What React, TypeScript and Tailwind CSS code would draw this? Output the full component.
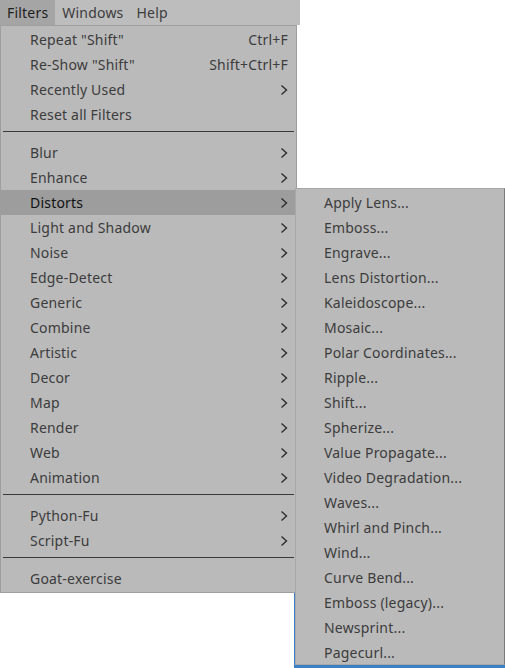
import React from "react";

type Item =
  | { kind: "item"; label: string; shortcut?: string; sub?: boolean; active?: boolean }
  | { kind: "sep" };

const mainMenu: Item[] = [
  { kind: "item", label: 'Repeat "Shift"', shortcut: "Ctrl+F" },
  { kind: "item", label: 'Re-Show "Shift"', shortcut: "Shift+Ctrl+F" },
  { kind: "item", label: "Recently Used", sub: true },
  { kind: "item", label: "Reset all Filters" },
  { kind: "sep" },
  { kind: "item", label: "Blur", sub: true },
  { kind: "item", label: "Enhance", sub: true },
  { kind: "item", label: "Distorts", sub: true, active: true },
  { kind: "item", label: "Light and Shadow", sub: true },
  { kind: "item", label: "Noise", sub: true },
  { kind: "item", label: "Edge-Detect", sub: true },
  { kind: "item", label: "Generic", sub: true },
  { kind: "item", label: "Combine", sub: true },
  { kind: "item", label: "Artistic", sub: true },
  { kind: "item", label: "Decor", sub: true },
  { kind: "item", label: "Map", sub: true },
  { kind: "item", label: "Render", sub: true },
  { kind: "item", label: "Web", sub: true },
  { kind: "item", label: "Animation", sub: true },
  { kind: "sep" },
  { kind: "item", label: "Python-Fu", sub: true },
  { kind: "item", label: "Script-Fu", sub: true },
  { kind: "sep" },
  { kind: "item", label: "Goat-exercise" },
];

const distorts = [
  "Apply Lens...",
  "Emboss...",
  "Engrave...",
  "Lens Distortion...",
  "Kaleidoscope...",
  "Mosaic...",
  "Polar Coordinates...",
  "Ripple...",
  "Shift...",
  "Spherize...",
  "Value Propagate...",
  "Video Degradation...",
  "Waves...",
  "Whirl and Pinch...",
  "Wind...",
  "Curve Bend...",
  "Emboss (legacy)...",
  "Newsprint...",
  "Pagecurl...",
];

const Chevron = () => (
  <svg width="8" height="12" viewBox="0 0 8 12" className="shrink-0">
    <polyline points="1.5,1.5 6.5,6 1.5,10.5" fill="none" stroke="#2e2e2e" strokeWidth="1.4" />
  </svg>
);

const App: React.FC = () => {
  return (
    <div
      className="relative w-[505px] h-[668px] bg-white overflow-hidden text-[14px] tracking-[0.2px] text-[#3c3c3c]"
      style={{ fontFamily: '"Noto Sans", "Open Sans", sans-serif' }}
    >
      {/* Menubar */}
      <div className="flex items-center w-[300px] h-[25px] bg-[#bdbdbd]">
        <div className="h-full flex items-center px-[7px] bg-[#a5a5a5] text-[#1e1e1e]">Filters</div>
        <div className="h-full flex items-center px-[7px]">Windows</div>
        <div className="h-full flex items-center px-[6px]">Help</div>
      </div>

      {/* Background window edge */}
      <div className="absolute left-[294px] top-[592px] w-[2px] h-[76px] bg-[#3b7fc4]" />
      <div className="absolute left-[294px] top-[665px] w-[211px] h-[3px] bg-[#3b7fc4]" />

      {/* Filters menu */}
      <div className="absolute left-0 top-[25px] w-[297px] bg-[#bababa] border border-[#9e9e9e] py-px">
        {mainMenu.map((it, i) =>
          it.kind === "sep" ? (
            <div key={i} className="mt-[4px] mb-[8px] h-px bg-[#3a3a3a] mx-[2px]" />
          ) : (
            <div
              key={i}
              className={`flex items-center h-[25px] pl-[29px] pr-[8px] ${
                it.active ? "bg-[#9d9d9d] text-[#111]" : ""
              }`}
            >
              <span className="flex-1">{it.label}</span>
              {it.shortcut && <span>{it.shortcut}</span>}
              {it.sub && <Chevron />}
            </div>
          )
        )}
      </div>

      {/* Distorts submenu */}
      <div className="absolute left-[295px] top-[188px] w-[210px] h-[477px] bg-[#bababa] border border-[#a8a8a8] border-r-[#7a7a7a] py-px">
        {distorts.map((d) => (
          <div key={d} className="flex items-center h-[25px] pl-[28px]">
            {d}
          </div>
        ))}
      </div>
    </div>
  );
};

export default App;
